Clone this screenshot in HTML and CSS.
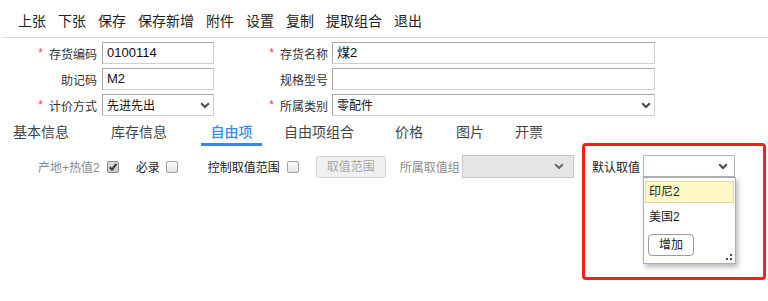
FILE: index.html
```html
<!DOCTYPE html>
<html lang="zh">
<head>
<meta charset="utf-8">
<title>存货</title>
<link rel="stylesheet" href="styles.css">
</head>
<body>
<div class="toolbar">
  <span>上张</span><span>下张</span><span>保存</span><span>保存新增</span><span>附件</span><span>设置</span><span>复制</span><span>提取组合</span><span>退出</span>
</div>

<div class="form">
  <div class="lbl"><i class="req">*</i>存货编码</div>
  <div class="input">0100114</div>
  <div class="lbl lbl2"><i class="req">*</i>存货名称</div>
  <div class="input">煤2</div>

  <div class="lbl">助记码</div>
  <div class="input">M2</div>
  <div class="lbl lbl2">规格型号</div>
  <div class="input"></div>

  <div class="lbl"><i class="req">*</i>计价方式</div>
  <div class="input select"><span>先进先出</span><svg class="chev" width="10" height="7" viewBox="0 0 10 7"><path d="M1.2 1.2 L5 5 L8.8 1.2" /></svg></div>
  <div class="lbl lbl2"><i class="req">*</i>所属类别</div>
  <div class="input select"><span>零配件</span><svg class="chev" width="10" height="7" viewBox="0 0 10 7"><path d="M1.2 1.2 L5 5 L8.8 1.2" /></svg></div>
</div>

<div class="tabs">
  <span class="tab t1">基本信息</span>
  <span class="tab t2">库存信息</span>
  <span class="tab active">自由项</span>
  <span class="tab t4">自由项组合</span>
  <span class="tab t5">价格</span>
  <span class="tab t6">图片</span>
  <span class="tab t7">开票</span>
</div>

<div class="freerow">
  <span class="muted">产地+热值2</span>
  <span class="cb checked c1"><svg width="10" height="10" viewBox="0 0 10 10"><path d="M1.8 5.2 L4 7.4 L8.4 2" /></svg></span>
  <span class="f2">必录</span>
  <span class="cb c2"></span>
  <span class="f3">控制取值范围</span>
  <span class="cb c3"></span>
  <span class="btn-disabled">取值范围</span>
  <span class="muted f4">所属取值组</span>
  <div class="select-disabled"><svg class="chev" width="10" height="7" viewBox="0 0 10 7"><path d="M1.2 1.2 L5 5 L8.8 1.2" /></svg></div>
</div>

<div class="highlight">
  <div class="default-row">
    <span>默认取值</span>
    <div class="dsel">
      <svg class="chev" width="10" height="7" viewBox="0 0 10 7"><path d="M1.2 1.2 L5 5 L8.8 1.2" /></svg>
      <div class="dropdown">
        <div class="opt hover">印尼2</div>
        <div class="opt">美国2</div>
        <span class="add">增加</span>
        <svg class="grip" width="6" height="6" viewBox="0 0 6 6"><rect x="4" y="0" width="2" height="2"/><rect x="0" y="4" width="2" height="2"/><rect x="4" y="4" width="2" height="2"/></svg>
      </div>
    </div>
  </div>
</div>
</body>
</html>
```

FILE: styles.css
```css
html, body {
  margin: 0;
  padding: 0;
  background: #fff;
}
body {
  font-family: "Liberation Sans", "Noto Sans CJK SC", sans-serif;
  color: #333;
  width: 768px;
  height: 301px;
  overflow: hidden;
  position: relative;
}

.toolbar {
  display: flex;
  gap: 12px;
  box-sizing: border-box;
  height: 38px;
  padding: 11px 0 0 16px;
  margin-left: 2px;
  font-size: 14px;
  line-height: 20px;
  color: #222;
  border-bottom: 1px solid #dcdcdc;
}

.form {
  display: grid;
  grid-template-columns: 102px 112px 118px 323px;
  grid-auto-rows: 22px;
  row-gap: 4px;
  margin-top: 4px;
}
.lbl {
  display: flex;
  justify-content: flex-end;
  align-items: center;
  padding-right: 5px;
  font-size: 12px;
  color: #333;
}
.lbl2 { padding-right: 4px; }
.req {
  font-style: normal;
  color: #e8474a;
  margin-right: 6px;
  font-size: 12px;
}
.input {
  box-sizing: border-box;
  height: 22px;
  border: 1px solid;
  border-color: #a9a9a9 #cfcfcf #cfcfcf #a9a9a9;
  padding: 0 4px;
  font-size: 13px;
  line-height: 20px;
  color: #111;
  background: #fff;
}
.select {
  display: flex;
  align-items: center;
  justify-content: space-between;
  font-size: 12px;
  padding-right: 3px;
  padding-top: 1px;
}
.chev path {
  fill: none;
  stroke: #4a4a4a;
  stroke-width: 2;
}

.tabs {
  display: flex;
  margin-top: 6px;
  font-size: 14px;
  line-height: 20px;
  color: #444;
}
.tab {
  padding-bottom: 1px;
  border-bottom: 3px solid transparent;
  white-space: nowrap;
}
.t1 { margin-left: 13px; }
.t2 { margin-left: 42px; }
.tab.active {
  margin-left: 34px;
  width: 61px;
  text-align: center;
  color: #3a8ae8;
  border-bottom-color: #3a86ef;
  font-weight: 500;
}
.t4 { margin-left: 22px; }
.t5 { margin-left: 41px; }
.t6 { margin-left: 33px; }
.t7 { margin-left: 31px; }

.freerow {
  display: flex;
  align-items: center;
  height: 23px;
  margin-top: 9px;
  padding-left: 38px;
  font-size: 12px;
  color: #222;
}
.muted { color: #8c8c8c; }
.cb {
  box-sizing: border-box;
  width: 12px;
  height: 12px;
  border: 1px solid #a0a0a0;
  border-radius: 2px;
  background: linear-gradient(#fafafa, #e4e4e4);
  display: flex;
  align-items: center;
  justify-content: center;
}
.cb.checked {
  background: linear-gradient(#dcdcdc, #c4c4c4);
  border-color: #8a8a8a;
}
.cb svg path {
  fill: none;
  stroke: #333;
  stroke-width: 2;
}
.c1 { margin-left: 7px; }
.f2 { margin-left: 17px; }
.c2 { margin-left: 6px; }
.f3 { margin-left: 30px; }
.c3 { margin-left: 7px; }
.btn-disabled {
  box-sizing: border-box;
  margin-left: 17px;
  width: 70px;
  height: 22px;
  line-height: 20px;
  text-align: center;
  border: 1px solid #d2d2d2;
  border-radius: 3px;
  background: #f0f0f0;
  color: #a8a8a8;
}
.f4 { margin-left: 14px; }
.select-disabled {
  box-sizing: border-box;
  margin-left: 2px;
  width: 112px;
  height: 23px;
  border: 1px solid #c8c8c8;
  background: #e6e6e6;
  display: flex;
  align-items: center;
  justify-content: flex-end;
  padding-right: 9px;
}
.select-disabled .chev path { stroke: #666; }

.highlight {
  position: absolute;
  left: 582px;
  top: 143px;
  width: 184px;
  height: 137px;
  box-sizing: border-box;
  border: 3px solid #fa1e1e;
  border-radius: 4px;
}
.default-row {
  display: flex;
  align-items: center;
  margin: 9px 0 0 7px;
  font-size: 12px;
  color: #222;
}
.dsel {
  position: relative;
  box-sizing: border-box;
  margin-left: 3px;
  width: 92px;
  height: 22px;
  border: 1px solid #b4b4b4;
  background: #fff;
  display: flex;
  align-items: center;
  justify-content: flex-end;
  padding-right: 6px;
}
.dropdown {
  position: absolute;
  left: -1px;
  top: 21px;
  width: 93px;
  height: 87px;
  box-sizing: border-box;
  border: 1px solid #a9a9c2;
  background: #fff;
  box-shadow: 2px 3px 5px rgba(0, 0, 0, 0.28);
  padding: 3px 1px 0 1px;
  font-size: 12px;
  color: #222;
}
.opt {
  box-sizing: border-box;
  height: 23px;
  line-height: 21px;
  padding-left: 3px;
  border: 1px solid transparent;
}
.opt.hover {
  height: 22px;
  line-height: 20px;
  background: #fff7c4;
  border-color: #e6dc98;
}
.opt + .opt {
  margin-top: 1px;
  height: 24px;
  line-height: 24px;
}
.add {
  display: block;
  box-sizing: border-box;
  width: 46px;
  height: 22px;
  line-height: 20px;
  margin: 6px 0 0 3px;
  text-align: center;
  border: 1px solid #9a9a9a;
  border-radius: 4px;
  background: #fff;
}
.grip {
  position: absolute;
  right: 3px;
  bottom: 3px;
  fill: #444;
}
```
